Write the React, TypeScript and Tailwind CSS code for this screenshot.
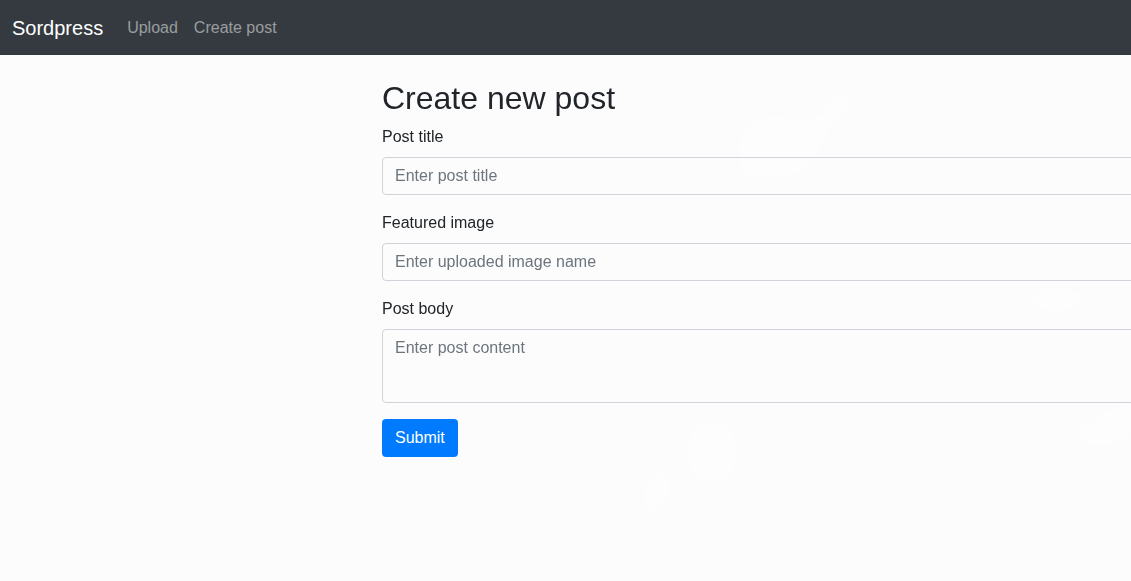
import React from "react";

export default function App() {
  return (
    <div
      className="relative min-h-[581px] w-full overflow-hidden bg-[#fcfcfc] text-[#212529]"
      style={{ fontFamily: '"Liberation Sans", Arial, sans-serif' }}
    >
      <svg
        className="absolute inset-0 pointer-events-none"
        width="1131"
        height="581"
        viewBox="0 0 1131 581"
      >
        <g fill="#ffffff" opacity="0.45">
          <path d="M748 128 C 760 112, 790 118, 810 120 C 825 118, 830 100, 840 97 C 852 96, 852 112, 840 118 C 825 126, 822 150, 805 168 C 790 180, 760 182, 745 172 C 735 160, 738 138, 748 128 Z" />
          <ellipse cx="1057" cy="299" rx="25" ry="11" />
          <ellipse cx="712" cy="452" rx="24" ry="30" />
          <ellipse cx="657" cy="492" rx="11" ry="19" transform="rotate(15 657 492)" />
          <path d="M1131 405 C 1110 408, 1090 420, 1080 432 C 1075 442, 1090 447, 1105 445 C 1118 442, 1126 437, 1131 434 Z" />
        </g>
      </svg>

      <nav className="relative flex h-[55px] items-center bg-[#343a40] px-3">
        <span className="mr-4 text-[20px] leading-[30px] text-white">Sordpress</span>
        <a className="px-2 text-[16px] leading-6 text-[rgba(255,255,255,0.5)]">Upload</a>
        <a className="px-2 text-[16px] leading-6 text-[rgba(255,255,255,0.5)]">Create post</a>
      </nav>

      <main className="relative pl-[382px] pt-6">
        <div className="w-[900px]">
          <h2 className="mb-2 text-[32px] font-medium leading-[1.2]">Create new post</h2>

          <div className="mb-4 flex flex-col">
            <label className="mb-2 text-[16px] leading-6">Post title</label>
            <input
              className="h-[38px] w-full rounded border border-[#ced4da] bg-transparent px-3 text-[16px] leading-6 placeholder:text-[#6c757d] outline-none"
              placeholder="Enter post title"
            />
          </div>

          <div className="mb-4 flex flex-col">
            <label className="mb-2 text-[16px] leading-6">Featured image</label>
            <input
              className="h-[38px] w-full rounded border border-[#ced4da] bg-transparent px-3 text-[16px] leading-6 placeholder:text-[#6c757d] outline-none"
              placeholder="Enter uploaded image name"
            />
          </div>

          <div className="mb-4 flex flex-col">
            <label className="mb-2 text-[16px] leading-6">Post body</label>
            <textarea
              className="h-[74px] w-full resize-none rounded border border-[#ced4da] bg-transparent px-3 py-1.5 text-[16px] leading-6 placeholder:text-[#6c757d] outline-none"
              placeholder="Enter post content"
            />
          </div>

          <button className="h-[38px] rounded bg-[#007bff] px-[13px] text-[16px] leading-6 text-white">
            Submit
          </button>
        </div>
      </main>
    </div>
  );
}
